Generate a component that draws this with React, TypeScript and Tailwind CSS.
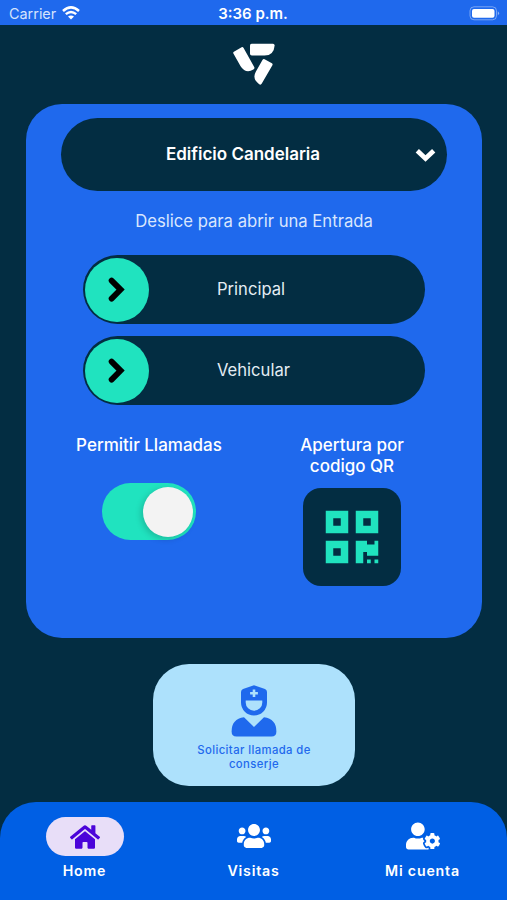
import React, { useState } from "react";
import { FaHome, FaQrcode, FaUserCog, FaUsers } from "react-icons/fa";

const Logo = () => (
  <svg width="42" height="43" viewBox="0 0 42 43" fill="#fff">
    <path d="M0.9 8.7 L8.6 4.3 Q9.8 3.7 10.6 4.9 L21.2 24 Q22 25.8 20.4 26.6 Q12.6 31 7.6 23.2 L0.4 10.6 Q-0.2 9.4 0.9 8.7Z" />
    <path d="M17 2.2 Q17 0.7 18.6 0.7 H40 Q41.6 0.7 41.6 2.4 Q41 12.2 31.5 12.6 H18.8 Q17 12.6 17 10.8Z" />
    <path d="M29.6 16.8 Q30.3 15.6 31.6 16.3 L38.9 20.2 Q40 20.9 39.4 22.2 L28.8 40.6 Q27.8 42.3 26.2 41.2 Q18.8 36 22.8 28.8Z" />
  </svg>
);

const Wifi = () => (
  <svg width="18" height="14" viewBox="0 0 18 14" fill="none">
    <path d="M1 5 Q9 -2.3 17 5" stroke="#fff" strokeWidth="2.5" />
    <path d="M3.8 8.2 Q9 3.6 14.2 8.2" stroke="#fff" strokeWidth="2.4" />
    <path d="M9 13.6 L6 10.6 Q9 8.2 12 10.6Z" fill="#fff" />
  </svg>
);

const Battery = () => (
  <svg width="31" height="15" viewBox="0 0 31 15">
    <rect x="1" y="0.8" width="26.5" height="13" rx="4" fill="none" stroke="#fff" strokeOpacity="0.4" />
    <rect x="3" y="2.9" width="22.5" height="8.8" rx="2" fill="#fff" />
    <path d="M28.8 5.2 Q31.4 7.2 28.8 9.4Z" fill="#fff" fillOpacity="0.5" />
  </svg>
);

const Guard = () => (
  <svg width="46" height="52" viewBox="0 0 46 52" fill="#1f69ed">
    <path
      fillRule="evenodd"
      d="M23 0.2 L34 4 Q36 4.8 36 7 V17.5 A13 13 0 0 1 10 17.5 V7 Q10 4.8 12 4Z M14.7 15.6 V17.5 A8.3 8.3 0 0 0 31.3 17.5 V15.6Z M21.7 4.4 V7 H19.1 V9.5 H21.7 V12.1 H24.3 V9.5 H26.9 V7 H24.3 V4.4Z"
    />
    <path d="M13 32.3 L23 42 L33 32.3 Q45.4 34 45.4 46.5 Q45.4 51.5 40.5 51.5 H5.5 Q0.6 51.5 0.6 46.5 Q0.6 34 13 32.3Z" />
  </svg>
);

const SlideButton = ({ label }: { label: string }) => (
  <div className="flex h-[69px] w-[342px] items-center rounded-full bg-[#032d42] pl-0.5">
    <div className="flex size-16 items-center justify-center rounded-full bg-[#20e3bf]">
      <svg width="18" height="26" viewBox="0 0 18 26" fill="none">
        <path d="M3.6 3.6 L12.6 12.6 L3.6 21.6" stroke="#000" strokeWidth="5.8" strokeLinecap="round" />
      </svg>
    </div>
    <span className="pl-[68px] text-[16.6px] text-[#e3ecf3]">{label}</span>
  </div>
);

const App = () => {
  const [allowCalls, setAllowCalls] = useState(true);

  return (
    <div className="flex h-[900px] w-[507px] flex-col overflow-hidden bg-[#032d42] font-['Inter',sans-serif] text-white">
      <div className="grid h-[25px] shrink-0 grid-cols-3 items-center bg-[#1f69ed] pt-[2px] pr-[7px] pl-[9px]">
        <div className="flex items-center gap-1.5 text-[14.4px] text-[#d5e3fc]">
          Carrier <Wifi />
        </div>
        <span className="pr-[3px] text-center text-[15px] leading-5 font-semibold">3:36 p.m.</span>
        <div className="flex justify-end">
          <Battery />
        </div>
      </div>

      <div className="flex h-[79px] shrink-0 justify-center pt-[18px]">
        <Logo />
      </div>

      <div className="mx-[26px] flex h-[534px] w-[456px] shrink-0 flex-col items-center rounded-[36px] bg-[#1f69ed] pt-[14px]">
        <button className="flex h-[73px] w-[386px] items-center rounded-full bg-[#032d42] pr-[11px]">
          <span className="grow pl-[10px] text-center text-[17px] font-semibold">Edificio Candelaria</span>
          <svg width="21" height="14" viewBox="0 0 21 14" fill="none">
            <path d="M2.3 2.8 L10.5 10.4 L18.7 2.8" stroke="#fff" strokeWidth="4.8" />
          </svg>
        </button>
        <p className="mt-[17px] text-[16.65px] leading-[26px] text-[#d9e6fd]">Deslice para abrir una Entrada</p>
        <div className="mt-[21px] flex flex-col gap-3">
          <SlideButton label="Principal" />
          <SlideButton label="Vehicular" />
        </div>
        <div className="mt-[30px] flex w-full">
          <div className="flex w-[246px] flex-col items-center">
            <p className="text-[17px] leading-[21px] font-medium">Permitir Llamadas</p>
            <button
              onClick={() => setAllowCalls(!allowCalls)}
              className={`mt-[27px] flex h-[57px] w-[94px] items-center rounded-full px-[3px] ${
                allowCalls ? "justify-end bg-[#20e3bf]" : "justify-start bg-gray-400"
              }`}
            >
              <span className="size-[50px] rounded-full bg-[#f3f3f3] shadow-[-2px_2px_6px_rgba(0,0,0,0.18)]" />
            </button>
          </div>
          <div className="flex w-[160px] flex-col items-center">
            <p className="text-center text-[17px] leading-[21px] font-medium">
              Apertura por
              <br />
              codigo QR
            </p>
            <button className="mt-[11px] flex size-[98px] items-center justify-center rounded-[18px] bg-[#032d42]">
              <FaQrcode size={60} color="#20e3bf" />
            </button>
          </div>
        </div>
      </div>

      <button className="mt-[26px] ml-[153px] flex h-[122px] w-[202px] shrink-0 flex-col items-center rounded-[36px] bg-[#ade1fc] pt-[21px]">
        <Guard />
        <span className="mt-[6px] w-[130px] text-[11.3px] leading-[14px] font-medium tracking-[0.4px] text-[#1f69ed]">
          Solicitar llamada de conserje
        </span>
      </button>

      <nav className="mt-4 grid h-[98px] shrink-0 grid-cols-3 rounded-t-[36px] bg-[#005fe4] pt-[15px] text-[14.2px] leading-[22px] font-semibold tracking-[0.8px]">
        <div className="flex flex-col items-center">
          <div className="flex h-[39px] w-[78px] items-center justify-center rounded-full bg-[#e8def8]">
            <FaHome size={30} color="#4b04d9" />
          </div>
          <span className="mt-[4px]">Home</span>
        </div>
        <div className="flex flex-col items-center">
          <div className="flex h-[38px] items-center">
            <FaUsers size={34} />
          </div>
          <span className="mt-[5px]">Visitas</span>
        </div>
        <div className="flex flex-col items-center">
          <div className="flex h-[38px] items-center">
            <FaUserCog size={34} />
          </div>
          <span className="mt-[5px]">Mi cuenta</span>
        </div>
      </nav>
    </div>
  );
};

export default App;
